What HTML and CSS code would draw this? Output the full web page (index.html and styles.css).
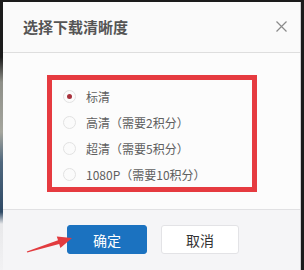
FILE: index.html
```html
<!DOCTYPE html>
<html lang="zh">
<head>
<meta charset="utf-8">
<link rel="stylesheet" href="styles.css">
</head>
<body>
<div class="screen">
  <div class="edge"></div>
  <div class="dialog">
    <div class="head">
      <h1 class="title">选择下载清晰度</h1>
      <span class="close"><svg width="11" height="11" viewBox="0 0 11 11"><path d="M0.5 0.5L10.5 10.5M10.5 0.5L0.5 10.5" stroke="#8a8a8a" stroke-width="1.2" fill="none"/></svg></span>
    </div>
    <div class="body">
      <div class="box">
        <div class="opt"><span class="radio on"></span><span class="label">标清</span></div>
        <div class="opt"><span class="radio"></span><span class="label">高清（需要2积分）</span></div>
        <div class="opt"><span class="radio"></span><span class="label">超清（需要5积分）</span></div>
        <div class="opt"><span class="radio"></span><span class="label">1080P（需要10积分）</span></div>
      </div>
    </div>
    <div class="foot">
      <button class="btn primary">确定</button>
      <button class="btn">取消</button>
    </div>
  </div>
  <svg class="arrow" width="304" height="270" viewBox="0 0 304 270">
    <polygon points="26.8,251.4 58.0,240.3 56.8,236.5 72,238 60.4,247.9 59.2,244.1 27.2,252.6" fill="#e23b3f"/>
  </svg>
</div>
</body>
</html>
```
FILE: styles.css
```css
* { box-sizing: border-box; }
html, body { margin: 0; padding: 0; }
body {
  width: 304px;
  height: 270px;
  overflow: hidden;
  background: #1b1b1b;
  font-family: "Microsoft YaHei", "Noto Sans CJK SC", "Noto Sans", sans-serif;
}
.screen {
  position: relative;
  display: flex;
  width: 304px;
  height: 270px;
  padding-top: 2px;
}
.edge {
  width: 3px;
  flex: none;
  background: linear-gradient(to bottom, #1b1b1b 0, #1b1b1b 55px, #8e8f88 80px, #a5a69e 130px, #50687e 160px, #2f4a66 210px, #e8e8ea 222px, #f2f2f4 270px);
}
.dialog {
  width: 298px;
  flex: none;
  display: flex;
  flex-direction: column;
  border-right: 1px solid #cfcfd2;
  background: #fafafa;
}
.head {
  height: 51px;
  flex: none;
  display: flex;
  align-items: center;
  justify-content: space-between;
  padding: 0 12px 2px 20px;
  background: #fafafa;
  border-bottom: 1px solid #dedede;
}
.title {
  margin: 0;
  font-size: 15px;
  font-weight: bold;
  color: #555;
  letter-spacing: 0;
}
.close {
  display: flex;
  width: 11px;
  height: 11px;
  margin-right: 1px;
}
.body {
  height: 157px;
  flex: none;
  padding: 22px 0 0 44px;
  background: #fcfcfc;
  border-bottom: 1px solid #e1e1e3;
}
.box {
  width: 210px;
  height: 117px;
  border: 5px solid #e63b40;
  padding: 3px 0 0 11px;
  display: flex;
  flex-direction: column;
}
.opt {
  height: 26px;
  display: flex;
  align-items: center;
  gap: 10px;
}
.radio {
  width: 13px;
  height: 13px;
  border: 1px solid #e2e2e2;
  border-radius: 50%;
  background: #fbfbfb;
  display: flex;
  align-items: center;
  justify-content: center;
}
.radio.on::after {
  content: "";
  width: 5px;
  height: 5px;
  border-radius: 50%;
  background: #a8323d;
}
.label {
  font-size: 12px;
  color: #606060;
}
.foot {
  flex: 1;
  background: #f5f5f7;
  display: flex;
  align-items: flex-start;
  padding: 15px 0 0 64px;
  gap: 14px;
}
.btn {
  height: 29px;
  width: 78px;
  border: 1px solid #e3e3e6;
  border-radius: 3px;
  background: #fff;
  color: #333;
  font-family: inherit;
  font-size: 14px;
  padding: 0;
}
.btn.primary {
  width: 80px;
  background: #1b72c0;
  border-color: #1b72c0;
  color: #fff;
}
.arrow {
  position: absolute;
  left: 0;
  top: 0;
  pointer-events: none;
}
```
